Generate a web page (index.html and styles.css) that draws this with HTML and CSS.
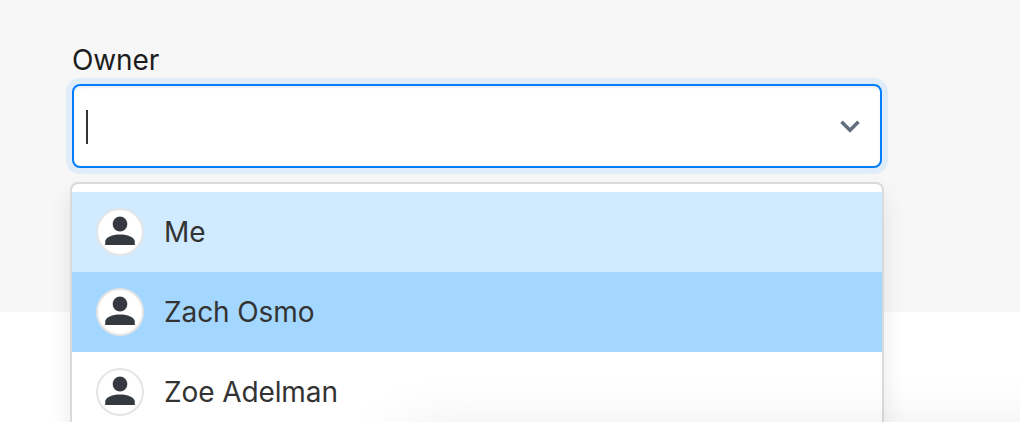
FILE: index.html
```html
<!DOCTYPE html>
<html lang="en">
<head>
<meta charset="utf-8">
<title>Owner</title>
<link rel="stylesheet" href="styles.css">
</head>
<body>
<svg class="sprite" aria-hidden="true">
  <symbol id="person" viewBox="0 0 44 44">
    <circle cx="22" cy="14" r="7.4"/>
    <path d="M7.2 35V32C7.2 27 14.5 24.4 22 24.4S36.8 27 36.8 32V35Z"/>
  </symbol>
</svg>
<main class="page">
  <div class="field">
    <div class="label">Owner</div>
    <div class="select">
      <span class="caret"></span>
      <svg class="chevron" viewBox="0 0 20 13"><path d="M1.5 1.7 10 10.2 18.5 1.7"/></svg>
    </div>
    <div class="menu">
      <div class="option option-light"><svg class="avatar"><use href="#person"/></svg><span>Me</span></div>
      <div class="option option-active"><svg class="avatar"><use href="#person"/></svg><span>Zach Osmo</span></div>
      <div class="option"><svg class="avatar"><use href="#person"/></svg><span>Zoe Adelman</span></div>
    </div>
  </div>
  <div class="edge-shadow"></div>
</main>
</body>
</html>
```
FILE: styles.css
```css
* { box-sizing: border-box; }
body {
  margin: 0;
  background: #fff;
  font-family: Inter, sans-serif;
  font-size: 28px;
  font-weight: 400;
  letter-spacing: -0.1px;
  color: #333;
}
.sprite { position: absolute; width: 0; height: 0; }
.page {
  position: relative;
  height: 422px;
  padding: 40px 136px 0 70px;
  overflow: hidden;
  background: linear-gradient(#f7f7f7 312px, #fff 312px);
}
.field { display: flex; flex-direction: column; }
.label { height: 44px; padding-left: 2px; line-height: 40px; color: #1c1c1c; }
.select {
  display: flex;
  align-items: center;
  justify-content: space-between;
  height: 84px;
  margin: 0 2px;
  padding: 0 20px 0 12px;
  border: 2px solid #007eff;
  border-radius: 8px;
  background: #fff;
  box-shadow: 0 0 0 6px #e1ecf9, inset 0 2px 2px rgba(0, 0, 0, .06);
}
.caret { width: 2px; height: 34px; margin-top: 2px; background: #333; }
.chevron { width: 20px; height: 13px; margin-top: 1px; fill: none; stroke: #636f7e; stroke-width: 3.6; }
.menu {
  height: 240px;
  margin-top: 14px;
  padding-top: 8px;
  border: 2px solid #dadada;
  border-bottom: 0;
  border-radius: 8px 8px 0 0;
  background: #fff;
  background-clip: padding-box;
  box-shadow: 0 12px 24px rgba(0, 0, 0, .09);
}
.option { display: flex; align-items: center; gap: 20px; height: 80px; padding-left: 24px; }
.option:last-child { margin-bottom: -10px; }
.option-light { background: #d0eaff; }
.option-active { background: #a3d7ff; }
.avatar {
  width: 48px;
  height: 48px;
  border: 2px solid #e5e5e5;
  border-radius: 50%;
  background: #fff;
  fill: #343a40;
}
/* Soft shadow cast upward by the panel beneath the fold. */
.edge-shadow {
  position: absolute;
  top: 440px;
  left: 400px;
  width: 800px;
  height: 100px;
  border-radius: 20px;
  box-shadow: 0 0 70px rgba(0, 0, 0, .12);
}
```
